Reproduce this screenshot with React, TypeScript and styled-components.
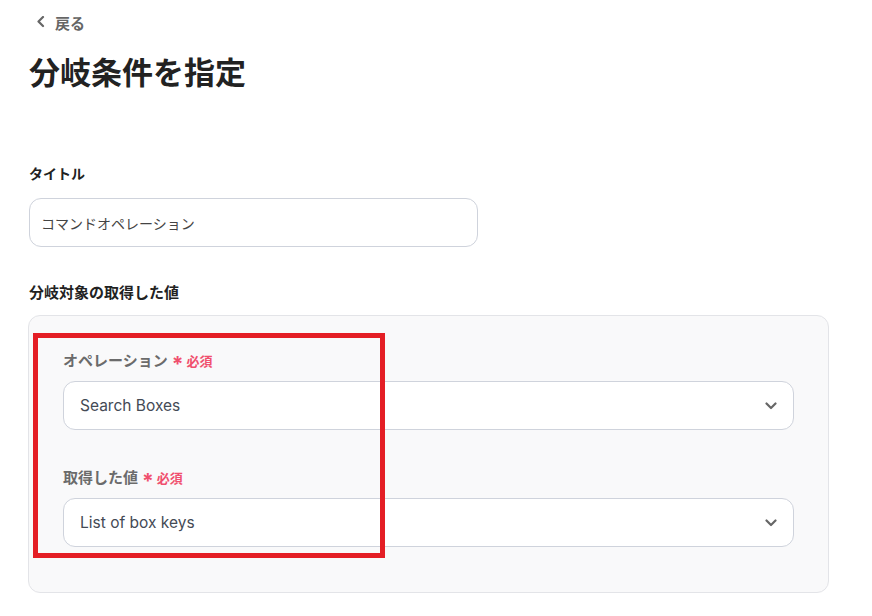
import styled, { createGlobalStyle } from "styled-components";

const GlobalStyle = createGlobalStyle`
  html, body {
    margin: 0;
    padding: 0;
    background: #ffffff;
  }
  body {
    font-family: Inter, "Noto Sans CJK JP", sans-serif;
    color: #222222;
  }
`;

const Page = styled.div`
  width: 872px;
  height: 616px;
  padding: 0 0 0 29px;
  box-sizing: border-box;
  overflow: hidden;
`;

const BackLink = styled.a`
  display: flex;
  align-items: center;
  gap: 7px;
  height: 44px;
  padding-left: 7px;
  color: #666666;
  font-size: 15px;
  font-weight: 700;
  text-decoration: none;
`;

const Heading = styled.h1`
  margin: 6px 0 0 0;
  font-size: 31px;
  line-height: 46px;
  font-weight: 700;
  color: #222222;
`;

const Section = styled.div<{ $top: number }>`
  margin-top: ${(p) => p.$top}px;
`;

const Label = styled.div<{ $size?: number }>`
  font-size: ${(p) => p.$size ?? 14}px;
  font-weight: 700;
  line-height: 20px;
  color: #222222;
`;

const TextInput = styled.div`
  width: 449px;
  height: 49px;
  margin-top: 14px;
  box-sizing: border-box;
  border: 1px solid #cfd3dc;
  border-radius: 12px;
  display: flex;
  align-items: center;
  padding-left: 11px;
  font-size: 14px;
  color: #444444;
`;

const Panel = styled.div`
  position: relative;
  width: 801px;
  box-sizing: border-box;
  margin: 12px 0 0 -1px;
  background: #f9f9fa;
  border: 1px solid #e3e4e8;
  border-radius: 12px;
  padding: 35px 34px 45px 34px;
  display: flex;
  flex-direction: column;
  gap: 38px;
`;

const Field = styled.div`
  display: flex;
  flex-direction: column;
  gap: 10px;
`;

const FieldLabel = styled.div`
  display: flex;
  align-items: center;
  gap: 4px;
  font-size: 15px;
  font-weight: 700;
  color: #6b6b6b;
  line-height: 20px;
`;

const Required = styled.span`
  display: flex;
  align-items: center;
  gap: 3px;
  color: #f0506e;
  font-size: 13px;
  font-weight: 700;
`;

const Asterisk = styled.span`
  font-size: 21px;
  line-height: 12px;
  padding-top: 8px;
`;

const Select = styled.div`
  height: 49px;
  box-sizing: border-box;
  background: #ffffff;
  border: 1px solid #cfd3dc;
  border-radius: 12px;
  display: flex;
  align-items: center;
  justify-content: space-between;
  padding: 0 16px 0 16px;
  font-size: 15.5px;
  color: #444a55;
`;

const Highlight = styled.div`
  position: absolute;
  left: 4px;
  top: 17px;
  width: 352px;
  height: 225px;
  box-sizing: border-box;
  border: 5px solid #e41e25;
  pointer-events: none;
`;

function Chevron({ dir }: { dir: "left" | "down" }) {
  const d = dir === "left" ? "M7 1 L2.5 5.5 L7 10" : "M1.5 3.5 L6 8 L10.5 3.5";
  return (
    <svg width="12" height="12" viewBox="0 0 12 12" fill="none">
      <path d={d} stroke="#666" strokeWidth="2.2" strokeLinecap="round" strokeLinejoin="round" />
    </svg>
  );
}

export default function App() {
  return (
    <>
      <GlobalStyle />
      <Page>
        <BackLink href="#">
          <Chevron dir="left" />
          戻る
        </BackLink>
        <Heading>分岐条件を指定</Heading>

        <Section $top={68}>
          <Label>タイトル</Label>
          <TextInput>コマンドオペレーション</TextInput>
        </Section>

        <Section $top={36}>
          <Label $size={15}>分岐対象の取得した値</Label>
          <Panel>
            <Field>
              <FieldLabel>
                オペレーション
                <Required>
                  <Asterisk>*</Asterisk>必須
                </Required>
              </FieldLabel>
              <Select>
                Search Boxes
                <Chevron dir="down" />
              </Select>
            </Field>
            <Field>
              <FieldLabel>
                取得した値
                <Required>
                  <Asterisk>*</Asterisk>必須
                </Required>
              </FieldLabel>
              <Select>
                List of box keys
                <Chevron dir="down" />
              </Select>
            </Field>
            <Highlight />
          </Panel>
        </Section>
      </Page>
    </>
  );
}
